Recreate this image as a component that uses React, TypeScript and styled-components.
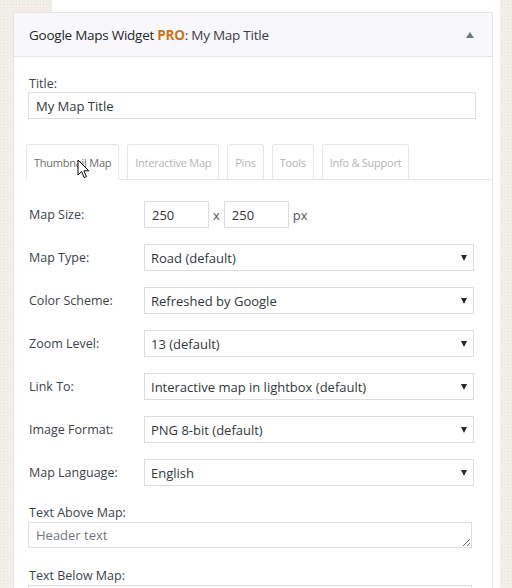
import React from "react";
import styled, { createGlobalStyle } from "styled-components";

const GlobalStyle = createGlobalStyle`
	html, body {
		margin: 0;
		padding: 0;
	}
	body {
		background-color: #f2efe9;
		background-image:
			radial-gradient(#e9e4da 0.6px, transparent 0.8px),
			radial-gradient(#f7f5f0 0.6px, transparent 0.8px);
		background-size: 3px 3px, 4px 4px;
		font-family: "Open Sans", "Noto Sans", sans-serif;
		color: #32373c;
	}
`;

const Shell = styled.div`
	margin-left: 13px;
	width: 487px;
	background: linear-gradient(to bottom, transparent 12px, #fff 12px);
`;

const TopStrip = styled.div`
	height: 12px;
	margin-left: 39px;
	background: #fff;
`;

const Panel = styled.div`
	width: 478px;
	border: 1px solid #e5e5e5;
	background: #fff;
	overflow: hidden;
`;

const Header = styled.div`
	display: flex;
	align-items: center;
	justify-content: space-between;
	height: 43px;
	padding: 0 18px 0 15px;
	background: #f8f8fa;
	border-bottom: 1px solid #e5e5e5;
`;

const HeaderTitle = styled.h3`
	margin: 0;
	font-size: 13.5px;
	font-weight: 400;
	color: #23282d;
	letter-spacing: -0.25px;
`;

const Pro = styled.b`
	color: #d5700f;
	font-weight: 700;
`;

const InTitle = styled.span`
	color: #3f3850;
`;

const Toggle = styled.span`
	width: 0;
	height: 0;
	border-left: 4px solid transparent;
	border-right: 4px solid transparent;
	border-bottom: 6px solid #6d7a80;
`;

const Body = styled.div`
	padding: 18px 16px 0 14px;
`;

const Label = styled.label`
	display: block;
	font-size: 12.5px;
	line-height: 17px;
	color: #3c434a;
	padding-left: 1px;
`;

const TextInput = styled.input<{ $w?: number }>`
	box-sizing: border-box;
	width: ${(p) => (p.$w ? `${p.$w}px` : "100%")};
	height: 27px;
	margin: 0;
	padding: 0 7px;
	border: 1px solid #dddddd;
	border-radius: 0;
	background: #fff;
	font-family: inherit;
	font-size: 13px;
	color: #32373c;
	outline: none;
`;

const Tabs = styled.div`
	display: flex;
	gap: 8px;
	margin: 25px -16px 0 -2px;
	border-bottom: 1px solid #e8e8e8;
	height: 35px;
	align-items: flex-end;
`;

const Tab = styled.div<{ $active?: boolean }>`
	position: relative;
	box-sizing: border-box;
	height: ${(p) => (p.$active ? "36px" : "35px")};
	margin-bottom: ${(p) => (p.$active ? "-1px" : "0")};
	padding: 0 7px;
	display: flex;
	align-items: center;
	border: 1px solid #e6e6e6;
	border-bottom: ${(p) => (p.$active ? "1px solid #fff" : "none")};
	border-radius: 3px 3px 0 0;
	background: #fff;
	font-size: 11px;
	color: ${(p) => (p.$active ? "#6b6b6b" : "#b4b4b4")};
	white-space: nowrap;
	letter-spacing: -0.25px;
`;

const Cursor = styled.svg`
	position: absolute;
	left: 50px;
	top: 14px;
`;

const Form = styled.div`
	display: flex;
	flex-direction: column;
	gap: 16px;
	padding-top: 21px;
`;

const Row = styled.div`
	display: flex;
	align-items: center;
	height: 27px;
`;

const RowLabel = styled.span`
	width: 115px;
	padding-left: 1px;
	font-size: 12.5px;
	color: #3c434a;
	flex-shrink: 0;
`;

const Sep = styled.span`
	font-size: 13px;
	color: #555;
	padding: 0 4px;
`;

const SelectWrap = styled.div`
	position: relative;
	width: 330px;
	height: 27px;
`;

const Select = styled.select`
	box-sizing: border-box;
	width: 100%;
	height: 27px;
	margin: 0;
	padding: 0 24px 0 6px;
	appearance: none;
	border: 1px solid #dddddd;
	border-radius: 0;
	background: #fff;
	font-family: inherit;
	font-size: 13px;
	color: #32373c;
	outline: none;
`;

const Arrow = styled.span`
	position: absolute;
	right: 7px;
	top: 11px;
	width: 0;
	height: 0;
	border-left: 3.5px solid transparent;
	border-right: 3.5px solid transparent;
	border-top: 6px solid #23282d;
	pointer-events: none;
`;

const Fields = styled.div`
	padding-top: 18px;
`;

const Field = styled.div`
	padding-top: 19px;
	&:first-child {
		padding-top: 0;
	}
`;

const TextArea = styled.textarea`
	box-sizing: border-box;
	display: block;
	width: 444px;
	height: 26px;
	margin: 1px 0 0;
	padding: 3px 7px;
	border: 1px solid #dddddd;
	border-radius: 0;
	font-family: inherit;
	font-size: 13px;
	color: #32373c;
	resize: vertical;
	outline: none;
	&::placeholder {
		color: #72777c;
	}
`;

const selects: { label: string; value: string }[] = [
	{ label: "Map Type:", value: "Road (default)" },
	{ label: "Color Scheme:", value: "Refreshed by Google" },
	{ label: "Zoom Level:", value: "13 (default)" },
	{ label: "Link To:", value: "Interactive map in lightbox (default)" },
	{ label: "Image Format:", value: "PNG 8-bit (default)" },
	{ label: "Map Language:", value: "English" },
];

const tabs = ["Thumbnail Map", "Interactive Map", "Pins", "Tools", "Info & Support"];

const App: React.FC = () => {
	return (
		<>
			<GlobalStyle />
			<Shell>
				<TopStrip />
				<Panel>
					<Header>
						<HeaderTitle>
							Google Maps Widget <Pro>PRO</Pro>
							<InTitle>: My Map Title</InTitle>
						</HeaderTitle>
						<Toggle />
					</Header>
					<Body>
						<Label htmlFor="gmw-title">Title:</Label>
						<TextInput id="gmw-title" defaultValue="My Map Title" />

						<Tabs>
							{tabs.map((t, i) => (
								<Tab key={t} $active={i === 0}>
									{t}
									{i === 0 && (
										<Cursor width="13" height="21" viewBox="0 0 13 21">
											<path
												d="M1 1 L1 16 L4.6 12.6 L7.2 18.6 L9.4 17.6 L6.9 11.8 L11.8 11.8 Z"
												fill="#fff"
												stroke="#000"
												strokeWidth="1"
											/>
										</Cursor>
									)}
								</Tab>
							))}
						</Tabs>

						<Form>
							<Row>
								<RowLabel>Map Size:</RowLabel>
								<TextInput $w={65} defaultValue="250" />
								<Sep>x</Sep>
								<TextInput $w={65} defaultValue="250" />
								<Sep>px</Sep>
							</Row>
							{selects.map((s) => (
								<Row key={s.label}>
									<RowLabel>{s.label}</RowLabel>
									<SelectWrap>
										<Select defaultValue={s.value}>
											<option>{s.value}</option>
										</Select>
										<Arrow />
									</SelectWrap>
								</Row>
							))}
						</Form>

						<Fields>
							<Field>
								<Label>Text Above Map:</Label>
								<TextArea placeholder="Header text" />
							</Field>
							<Field>
								<Label>Text Below Map:</Label>
								<TextArea placeholder="Footer text" />
							</Field>
						</Fields>
					</Body>
				</Panel>
			</Shell>
		</>
	);
};

export default App;
